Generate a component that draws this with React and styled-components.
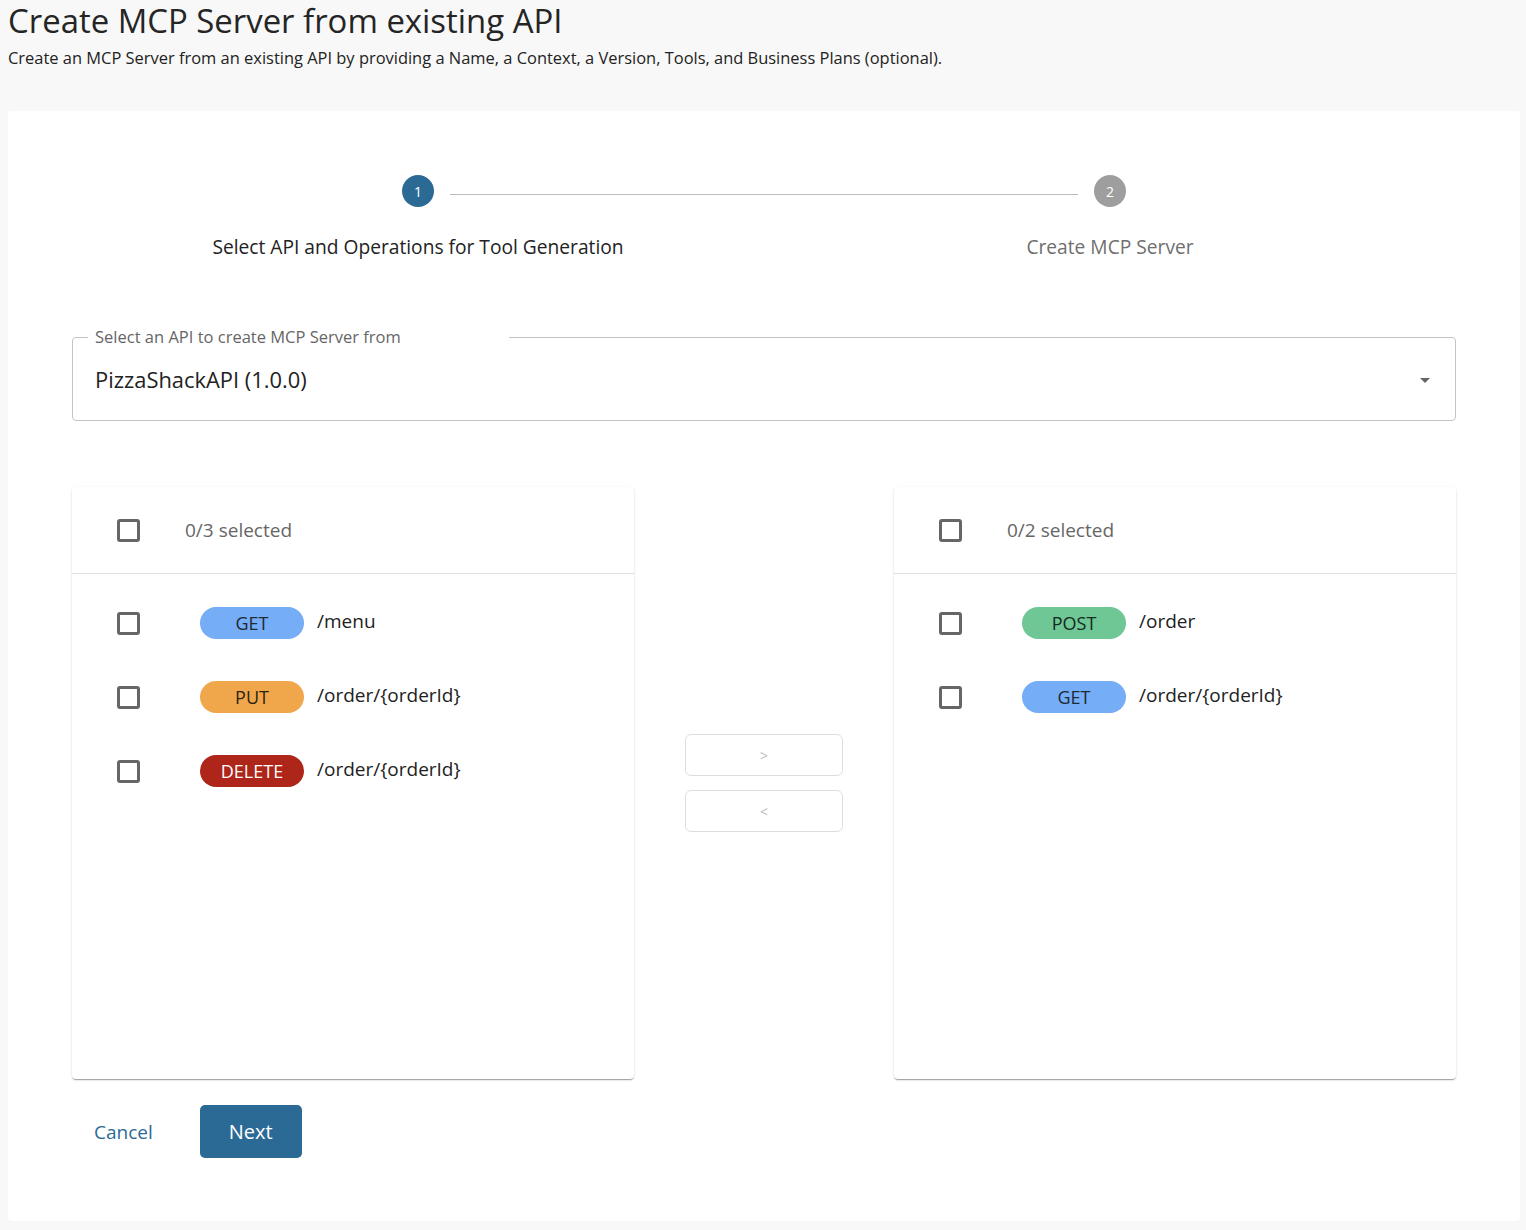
import React from "react";
import styled, { createGlobalStyle } from "styled-components";

const GlobalStyle = createGlobalStyle`
    body {
        margin: 0;
        background: #f8f8f8;
        font-family: 'Open Sans', 'Noto Sans', sans-serif;
        color: #222;
    }
    * { box-sizing: border-box; }
`;

const METHOD_COLORS = {
    GET: { bg: "#75adf6", fg: "#1f2a33" },
    PUT: { bg: "#f0a74b", fg: "#2b2211" },
    DELETE: { bg: "#ae251a", fg: "#ffffff" },
    POST: { bg: "#6fc796", fg: "#14281d" },
};

const leftOps = [
    { method: "GET", path: "/menu" },
    { method: "PUT", path: "/order/{orderId}" },
    { method: "DELETE", path: "/order/{orderId}" },
];

const rightOps = [
    { method: "POST", path: "/order" },
    { method: "GET", path: "/order/{orderId}" },
];

function OperationList({ ops }) {
    return (
        <Panel>
            <PanelHeader>
                <Check />
                <Count>0/{ops.length} selected</Count>
            </PanelHeader>
            <List>
                {ops.map((op, i) => (
                    <Item key={i}>
                        <Check />
                        <Chip $method={op.method}>{op.method}</Chip>
                        <Path>{op.path}</Path>
                    </Item>
                ))}
            </List>
        </Panel>
    );
}

export default function App() {
    return (
        <Page>
            <GlobalStyle />
            <Title>Create MCP Server from existing API</Title>
            <Subtitle>
                Create an MCP Server from an existing API by providing a Name, a Context, a Version, Tools, and Business Plans (optional).
            </Subtitle>
            <Card>
                <Stepper>
                    <Step>
                        <StepHead>
                            <Line $hidden />
                            <Circle $active>1</Circle>
                            <Line />
                        </StepHead>
                        <StepLabel $active>Select API and Operations for Tool Generation</StepLabel>
                    </Step>
                    <Step>
                        <StepHead>
                            <Line />
                            <Circle>2</Circle>
                            <Line $hidden />
                        </StepHead>
                        <StepLabel>Create MCP Server</StepLabel>
                    </Step>
                </Stepper>

                <SelectField>
                    <Legend>Select an API to create MCP Server from</Legend>
                    <SelectRow>
                        <SelectValue>PizzaShackAPI (1.0.0)</SelectValue>
                        <svg width="24" height="24" viewBox="0 0 24 24">
                            <path d="M7 10l5 5 5-5z" fill="#666" />
                        </svg>
                    </SelectRow>
                </SelectField>

                <Transfer>
                    <OperationList ops={leftOps} />
                    <Middle>
                        <MoveButton>&gt;</MoveButton>
                        <MoveButton>&lt;</MoveButton>
                    </Middle>
                    <OperationList ops={rightOps} />
                </Transfer>

                <Footer>
                    <TextButton>Cancel</TextButton>
                    <PrimaryButton>Next</PrimaryButton>
                </Footer>
            </Card>
        </Page>
    );
}

const Page = styled.div`
    padding: 0 6px 9px 8px;
    min-height: 1230px;
`;

const Title = styled.h1`
    margin: -1px 0 0;
    font-size: 32.9px;
    font-weight: 400;
    color: #252525;
    line-height: 43px;
`;

const Subtitle = styled.p`
    margin: 5px 0 0;
    font-size: 16.45px;
    line-height: 22px;
    color: #222;
`;

const Card = styled.div`
    margin-top: 42px;
    background: #fff;
    border-radius: 4px;
    padding: 64px 64px 63px;
`;

const Stepper = styled.div`
    display: grid;
    grid-template-columns: 1fr 1fr;
`;

const Step = styled.div`
    display: flex;
    flex-direction: column;
    align-items: center;
`;

const StepHead = styled.div`
    display: flex;
    align-items: center;
    width: 100%;
`;

const Line = styled.div`
    flex: 1;
    height: 1px;
    margin-top: 6px;
    background: ${p => (p.$hidden ? "transparent" : "#bdbdbd")};
`;

const Circle = styled.div`
    width: 32px;
    height: 32px;
    margin: 0 16px;
    border-radius: 50%;
    background: ${p => (p.$active ? "#2c6a96" : "#9e9e9e")};
    color: #fff;
    font-size: 14px;
    display: flex;
    align-items: center;
    justify-content: center;
`;

const StepLabel = styled.div`
    margin-top: 28px;
    font-size: 19.2px;
    line-height: 24px;
    color: ${p => (p.$active ? "#222" : "#6f6f6f")};
`;

const SelectField = styled.fieldset`
    margin: 67px 0 0;
    padding: 0 22px 8px;
    border: 1px solid #c4c4c4;
    border-radius: 4px;
    min-width: 0;
`;

const Legend = styled.legend`
    margin-left: -7px;
    padding: 0 108px 0 7px;
    font-size: 16.5px;
    line-height: 22px;
    color: #666;
`;

const SelectRow = styled.div`
    display: flex;
    align-items: center;
    justify-content: space-between;
    height: 64px;
    margin-right: -4px;
`;

const SelectValue = styled.div`
    font-size: 21.9px;
    margin-top: -2px;
    color: #222;
`;

const Transfer = styled.div`
    margin-top: 66px;
    display: grid;
    grid-template-columns: 562px 1fr 562px;
`;

const Panel = styled.div`
    height: 592px;
    background: #fff;
    border-radius: 4px;
    box-shadow: 0 2px 1px -1px rgba(0,0,0,0.2), 0 1px 1px 0 rgba(0,0,0,0.14), 0 1px 3px 0 rgba(0,0,0,0.12);
`;

const PanelHeader = styled.div`
    height: 87px;
    display: flex;
    align-items: center;
    padding-left: 45px;
    border-bottom: 1px solid #e0e0e0;
`;

const Check = styled.span`
    width: 23px;
    height: 23px;
    border: 3px solid #666;
    border-radius: 3px;
    flex: none;
`;

const Count = styled.span`
    margin-left: 45px;
    font-size: 19px;
    color: #666;
`;

const List = styled.div`
    padding-top: 12px;
`;

const Item = styled.div`
    height: 74px;
    display: flex;
    align-items: center;
    padding-left: 45px;
`;

const Chip = styled.span`
    margin-left: 60px;
    width: 104px;
    height: 32px;
    border-radius: 16px;
    display: flex;
    align-items: center;
    justify-content: center;
    font-size: 18px;
    background: ${p => METHOD_COLORS[p.$method].bg};
    color: ${p => METHOD_COLORS[p.$method].fg};
`;

const Path = styled.span`
    margin-left: 13px;
    margin-top: -4px;
    font-size: 19px;
    color: #222;
`;

const Middle = styled.div`
    display: flex;
    flex-direction: column;
    align-items: center;
    justify-content: center;
    gap: 14px;
`;

const MoveButton = styled.button`
    width: 158px;
    height: 42px;
    background: #fff;
    border: 1px solid #dedede;
    border-radius: 6px;
    color: #bbb;
    font-family: inherit;
    font-size: 14px;
`;

const Footer = styled.div`
    margin-top: 26px;
    display: flex;
    align-items: center;
    gap: 25px;
`;

const TextButton = styled.button`
    background: none;
    border: none;
    padding: 8px 22px;
    font-family: inherit;
    font-size: 19px;
    color: #2c6a96;
`;

const PrimaryButton = styled.button`
    width: 102px;
    height: 53px;
    border: none;
    border-radius: 5px;
    background: #2c6a96;
    color: #fff;
    font-family: inherit;
    font-size: 20px;
`;
